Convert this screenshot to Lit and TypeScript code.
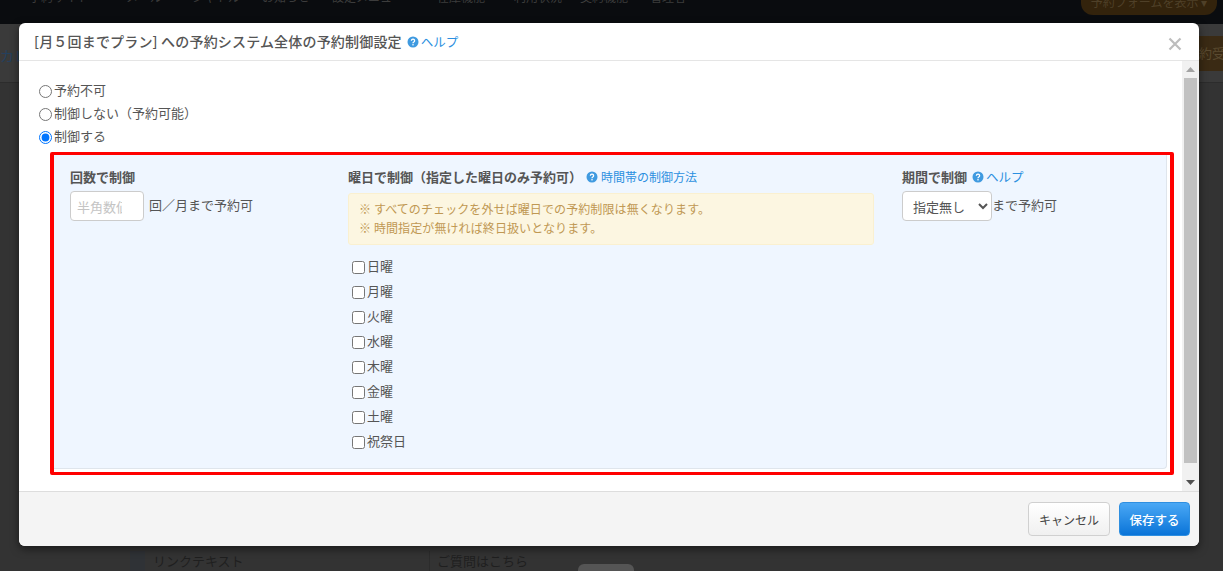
import { LitElement, html, css } from "lit";
import { customElement } from "lit/decorators.js";

const DAYS = ["日曜", "月曜", "火曜", "水曜", "木曜", "金曜", "土曜", "祝祭日"];
const NAV = ["予約サイト", "メール", "シャトル", "お知らせ", "設定メニュー", "在庫機能", "利用状況", "契約機能", "管理者"];

const help = html`<svg class="q" viewBox="0 0 12 12" aria-hidden="true"><circle cx="6" cy="6" r="5.5" fill="#3f9ae0"/><path d="M4.4 4.7a1.6 1.5 0 1 1 2.4 1.3c-.6.4-.8.6-.8 1.2" fill="none" stroke="#fff" stroke-width="1.3"/><rect x="5.3" y="8.1" width="1.4" height="1.3" fill="#fff"/></svg>`;

@customElement("app-root")
export class AppRoot extends LitElement {
  static styles = css`
    :host {
      display: block;
      position: relative;
      width: 1223px;
      height: 571px;
      overflow: hidden;
      background: #333;
      font-family: "Noto Sans CJK JP", "Noto Sans", sans-serif;
      font-size: 13px;
      color: #555;
    }
    .page { display: flex; flex-direction: column; height: 571px; }
    .nav {
      height: 24px; flex: none; background: #0a0c0f; display: flex; justify-content: space-between;
      padding: 0 6px 0 29px; color: #3c3c3c; font-size: 12px; line-height: 12px; overflow: hidden;
    }
    .nav-items {
      display: grid; grid-template-columns: 97px 66px 70px 70px 105px 77px 66px 70px auto;
      margin-top: -9px; height: 12px; white-space: nowrap;
    }
    .nav-btn {
      width: 136px; height: 15px; background: #33230c; border-radius: 0 0 12px 12px;
      color: #4f4028; font-size: 12px; line-height: 3px; text-align: center; overflow: hidden;
    }
    .sub {
      height: 58px; flex: none; background: #3a3a3a; border-bottom: 1px solid #2c2c2c; display: flex; justify-content: space-between;
      align-items: flex-start; font-size: 14px; color: #24405e; box-sizing: content-box; line-height: 62px;
    }
    .sub-right {
      width: 24px; height: 35px; margin-top: 12px; background: #3a2a14; color: #5a4a30; font-size: 13px;
      overflow: hidden; white-space: nowrap; line-height: 34px;
    }
    .spacer { flex: 1; }
    .table {
      height: 20px; flex: none; margin-left: 130px; width: 470px; display: flex; color: #1f1f1f; font-size: 13px; line-height: 20px;
      position: relative;
    }
    .c1 { width: 300px; flex: none; padding-left: 8px; border-left: 15px solid #2f3236; border-right: 1px solid #2c2c2c; box-sizing: border-box; white-space: nowrap; }
    .c2 { padding-left: 7px; white-space: nowrap; }
    .pill { position: absolute; left: 448px; top: 13px; width: 56px; height: 20px; background: #555; border-radius: 6px; }

    .modal {
      position: absolute; left: 19px; top: 23px; width: 1180px; height: 523px;
      background: #fff; border-radius: 6px; overflow: hidden; display: flex; flex-direction: column;
      box-shadow: 0 3px 9px rgba(0,0,0,.5);
    }
    header {
      height: 37px; flex: none; border-bottom: 1px solid #e5e5e5; display: flex; align-items: center;
      padding-left: 15px; position: relative; box-sizing: content-box;
    }
    h4 { margin: 0; font-size: 14px; font-weight: 500; letter-spacing: .18px; color: #555; line-height: 37px; white-space: nowrap; }
    a { color: #2b8fe0; text-decoration: none; }
    .q { width: 12px; height: 12px; flex: none; display: inline-block; }
    .help { display: inline-flex; align-items: center; gap: 2px; font-weight: 400; }
    header .help { margin-left: 5px; font-size: 12.5px; }
    .close {
      position: absolute; right: 15px; top: 12px; width: 18px; height: 18px; color: #bdbdbd;
    }
    .body { flex: 1; display: flex; min-height: 0; }
    .content { flex: 1; padding: 17px 8px 0 20px; min-width: 0; }
    .radio { display: flex; align-items: center; height: 23px; gap: 2px; }
    .radio input { margin: 4px 0 0; width: 13px; height: 13px; flex: none; }
    .redbox {
      margin: 5px 0 0 11px; width: 1124px; height: 323px; box-sizing: border-box;
      border-style: solid; border-color: #f00; border-width: 3px 4px; background: #fff; border-radius: 2px; padding: 0 3px 3px 0;
    }
    .panel {
      height: 100%; box-sizing: border-box; background: #eff6ff; border-right: 1px solid #dfe5ec; border-bottom: 1px solid #dfe5ec;
      border-radius: 0 0 4px 0; display: grid; grid-template-columns: 278px 554px 1fr; padding: 12px 0 0 16px;
    }
    .label { font-weight: 700; font-size: 13px; color: #555; line-height: 20px; height: 20px; display: flex; align-items: center; white-space: nowrap; }
    .label .help { margin-left: 4px; gap: 3px; font-size: 12px; }
    .col3 .label .help { font-size: 12.5px; margin-left: 5px; gap: 2px; }
    .inline { display: flex; align-items: center; margin-top: 4px; height: 30px; white-space: nowrap; }
    .inline span { padding-bottom: 4px; }
    .num {
      width: 74px; height: 30px; box-sizing: border-box; border: 1px solid #ccc; border-radius: 4px; background: #fff;
      padding: 0 21px 0 6px; margin-right: 5px; font: inherit; color: #555;
    }
    .num::placeholder { color: #c4c4c4; }
    select {
      width: 90px; height: 30px; box-sizing: border-box; border: 1px solid #ccc; border-radius: 4px; background: #fff;
      padding: 0 6px; font: inherit; color: #555;
    }
    .alert {
      margin-top: 6px; width: 526px; height: 52px; box-sizing: border-box; background: #fcf6e1; border: 1px solid #faf0d0;
      border-radius: 3px; color: #c09853; font-size: 12px; letter-spacing: .1px; line-height: 19px; padding: 5px 0 0 10px; white-space: nowrap;
    }
    .days { margin-top: 8px; padding-left: 4px; }
    .day { display: flex; align-items: center; height: 25px; gap: 2px; }
    .day input { margin: 4px 0 0; width: 13px; height: 13px; flex: none; }
    .bar { width: 17px; flex: none; background: #f1f1f1; display: flex; flex-direction: column; align-items: center; }
    .arrow { height: 17px; flex: none; display: flex; align-items: center; justify-content: center; }
    .thumb { flex: 1; width: 13px; margin-bottom: 11px; background: #c1c1c1; }
    footer {
      height: 44px; flex: none; background: #f4f4f4; border-top: 1px solid #ddd; display: flex; justify-content: flex-end;
      align-items: flex-start; gap: 9px; padding: 10px 9px 0 0; box-sizing: content-box;
    }
    button { height: 34px; border-radius: 4px; font: inherit; font-size: 12px; padding: 0; cursor: pointer; }
    .cancel { width: 82px; background: linear-gradient(#fff, #f0f0f0); border: 1px solid #d0d0d0; color: #444; }
    .save { width: 71px; font-size: 12.5px; background: linear-gradient(#4aa8f5, #0a74d8); border: 1px solid #2f8fe0; color: #fff; font-weight: 500; }
  `;

  render() {
    return html`
      <div class="page">
        <div class="nav">
          <div class="nav-items">${NAV.map((n) => html`<span>${n}</span>`)}</div>
          <div class="nav-btn">予約フォームを表示 ▾</div>
        </div>
        <div class="sub"><span>カレ</span><span class="sub-right">約受付</span></div>
        <div class="spacer"></div>
        <div class="table">
          <div class="c1">リンクテキスト</div>
          <div class="c2">ご質問はこちら</div>
          <div class="pill"></div>
        </div>
      </div>

      <div class="modal">
        <header>
          <h4>[月５回までプラン] への予約システム全体の予約制御設定</h4>
          <a class="help">${help}ヘルプ</a>
          <svg class="close" viewBox="0 0 18 18" aria-label="閉じる"><path d="M3.5 3.5l11 11M14.5 3.5l-11 11" stroke="currentColor" stroke-width="2.2" fill="none"/></svg>
        </header>
        <div class="body">
          <div class="content">
            <label class="radio"><input type="radio" name="r" />予約不可</label>
            <label class="radio"><input type="radio" name="r" />制御しない（予約可能）</label>
            <label class="radio"><input type="radio" name="r" checked />制御する</label>
            <div class="redbox">
              <div class="panel">
                <div>
                  <div class="label">回数で制御</div>
                  <div class="inline"><input class="num" placeholder="半角数値" /><span>回／月まで予約可</span></div>
                </div>
                <div>
                  <div class="label">曜日で制御（指定した曜日のみ予約可）<a class="help">${help}時間帯の制御方法</a></div>
                  <div class="alert">※ すべてのチェックを外せば曜日での予約制限は無くなります。<br />※ 時間指定が無ければ終日扱いとなります。</div>
                  <div class="days">
                    ${DAYS.map((d) => html`<label class="day"><input type="checkbox" />${d}</label>`)}
                  </div>
                </div>
                <div class="col3">
                  <div class="label">期間で制御<a class="help">${help}ヘルプ</a></div>
                  <div class="inline"><select><option>指定無し</option></select><span>まで予約可</span></div>
                </div>
              </div>
            </div>
          </div>
          <div class="bar">
            <div class="arrow"><svg width="9" height="5" viewBox="0 0 9 5"><path d="M4.5 0L9 5H0z" fill="#a3a3a3"/></svg></div>
            <div class="thumb"></div>
            <div class="arrow"><svg width="9" height="5" viewBox="0 0 9 5"><path d="M0 0h9L4.5 5z" fill="#505050"/></svg></div>
          </div>
        </div>
        <footer>
          <button class="cancel">キャンセル</button>
          <button class="save">保存する</button>
        </footer>
      </div>
    `;
  }
}
